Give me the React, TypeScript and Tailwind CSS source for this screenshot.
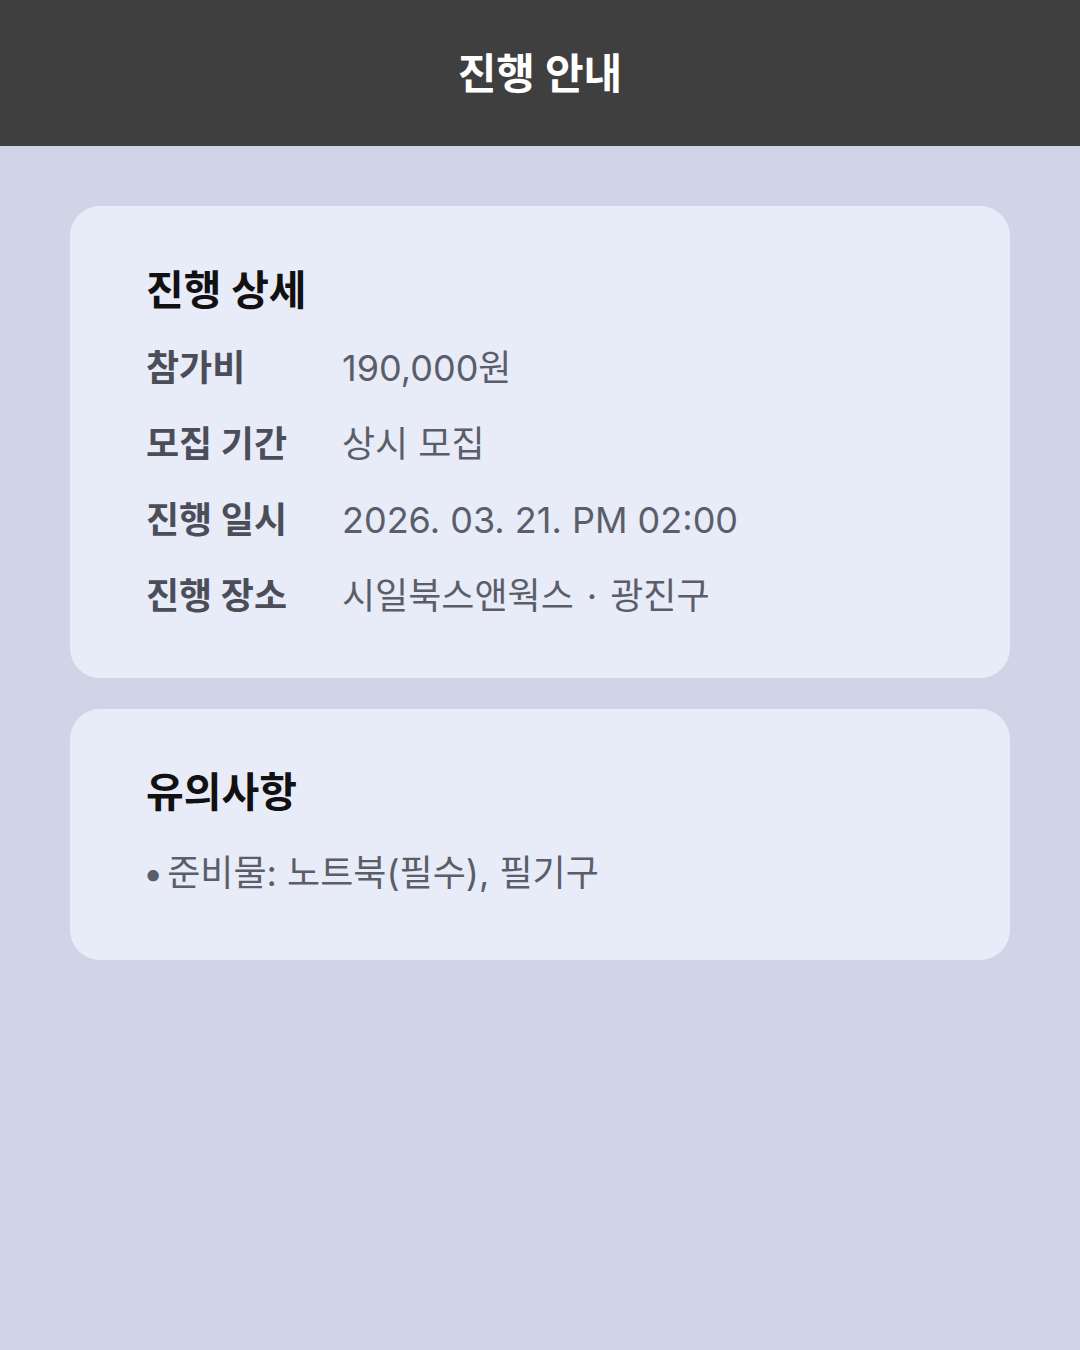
const fontStack = { fontFamily: 'Inter, "Noto Sans CJK KR", "Noto Sans", sans-serif' };

const details = [
    { label: "참가비", value: <>190,000원</> },
    { label: "모집 기간", value: <>상시 모집</> },
    { label: "진행 일시", value: <>2026. 03. 21. PM 02:00</> },
    {
        label: "진행 장소",
        value: (
            <>
                시일북스앤웍스
                <span className="mx-[13px]">·</span>
                광진구
            </>
        ),
    },
];

export default function App() {
    const cardStyles = "rounded-[30px] bg-[#e8ebf8] px-[76px]";
    const headingStyles = "text-[41px] leading-[56px] font-bold text-[#111111]";
    const rowTextStyles = "text-[36px] leading-[76px]";

    return (
        <div className="min-h-[1350px] bg-[#cfd4e6]" style={fontStack}>
            <div className="h-[146px] bg-[#3f3f3f] flex items-center justify-center">
                <div className="text-[42px] font-bold text-white">진행 안내</div>
            </div>

            <div className="px-[70px] pt-[60px] flex flex-col gap-[31px]">
                {/* 진행 상세 */}
                <div className={`${cardStyles} pt-[56px] pb-[44px]`}>
                    <div className={headingStyles}>진행 상세</div>
                    <div className="mt-[12px]">
                        {details.map((row, i) => (
                            <div key={i} className={`flex ${rowTextStyles}`}>
                                <div className="w-[196px] shrink-0 font-bold text-[#4b4e58]">
                                    {row.label}
                                </div>
                                <div className="text-[#5b5e69]">{row.value}</div>
                            </div>
                        ))}
                    </div>
                </div>

                {/* 유의사항 */}
                <div className={`${cardStyles} pt-[55px] pb-[49px]`}>
                    <div className={headingStyles}>유의사항</div>
                    <div className={`mt-[15px] text-[#5b5e69] ${rowTextStyles}`}>
                        <span className="-ml-[3px] mr-[4px]">•</span>준비물: 노트북(필수), 필기구
                    </div>
                </div>
            </div>
        </div>
    );
}
